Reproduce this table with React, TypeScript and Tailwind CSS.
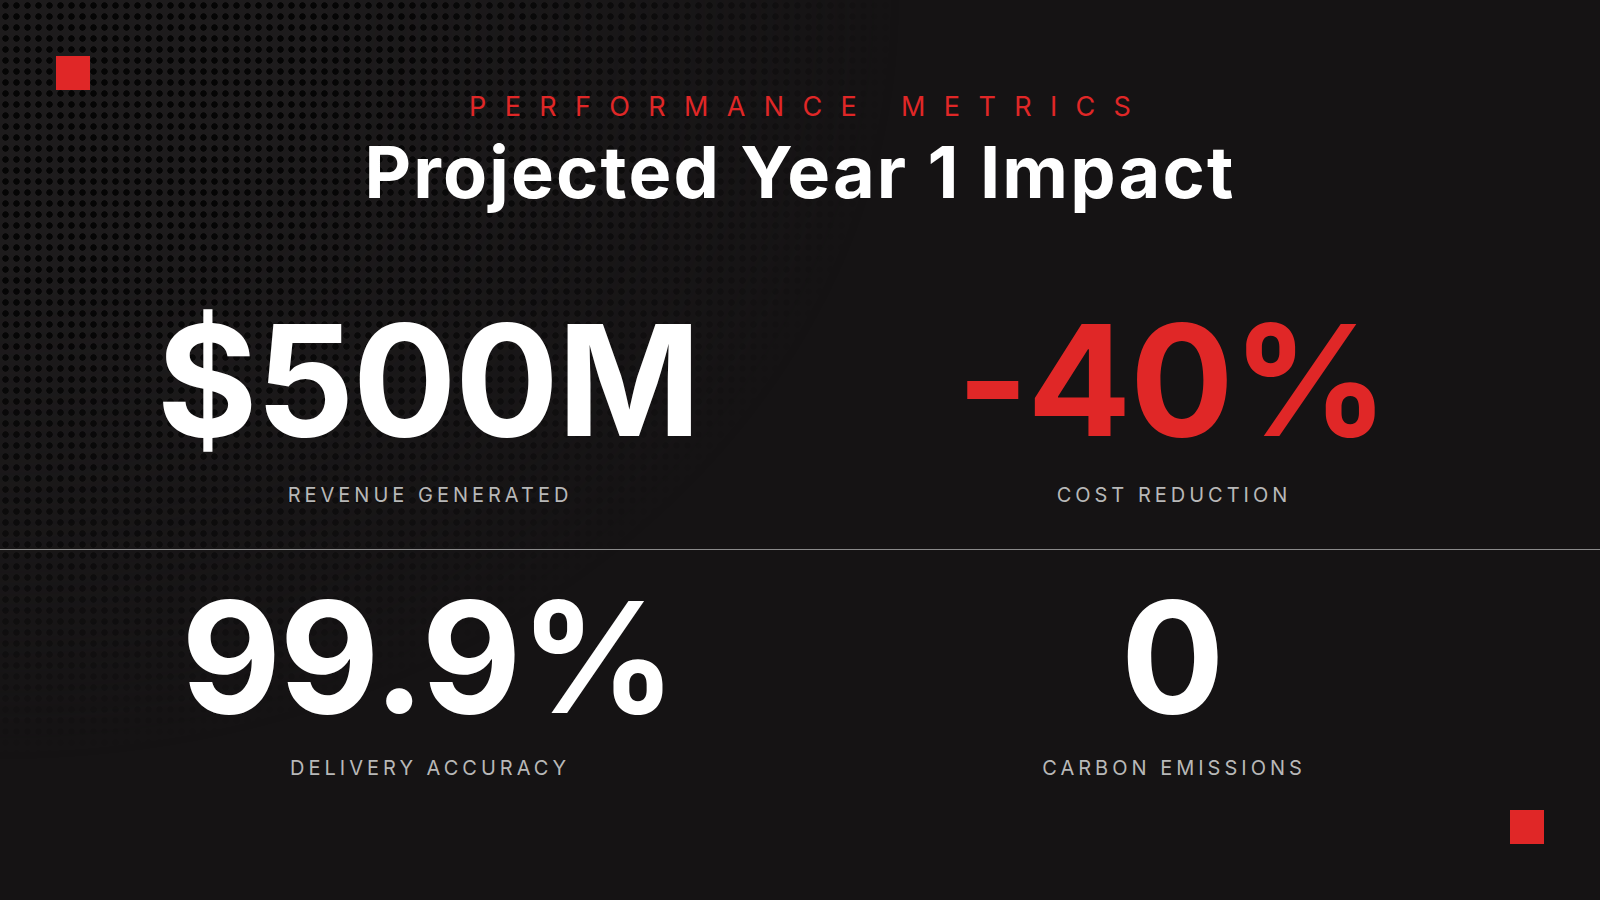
const stats = [
  { value: "$500M", label: "Revenue Generated", accent: false },
  { value: "-40%", label: "Cost Reduction", accent: true },
  { value: "99.9%", label: "Delivery Accuracy", accent: false },
  { value: "0", label: "Carbon Emissions", accent: false },
];

function Stat({
  value,
  label,
  accent,
  tight = false,
}: {
  value: string;
  label: string;
  accent: boolean;
  tight?: boolean;
}) {
  return (
    <div className="flex flex-col items-center">
      <div
        className={`text-[154px] font-bold leading-none tracking-[-0.01em] ${
          accent ? "text-[#e02727]" : "text-white"
        }`}
      >
        {value}
      </div>
      <div
        className={`${
          tight ? "mt-[24px]" : "mt-[28px]"
        } text-[20px] leading-none uppercase tracking-[0.2em] pl-[0.2em] text-[#b8b8b8]`}
      >
        {label}
      </div>
    </div>
  );
}

export default function App() {
  return (
    <div className="relative w-full h-[900px] overflow-hidden bg-[#151314] font-['Inter','Liberation_Sans',sans-serif]">
      {/* halftone dots, fading out from the top-left corner */}
      <div className="pointer-events-none absolute inset-0 bg-[#1d1b1c] bg-[radial-gradient(circle,#050505_2.9px,transparent_3.5px)] [background-size:11px_11px] [mask-image:radial-gradient(ellipse_900px_760px_at_0%_0%,#000_35%,rgba(0,0,0,0.6)_65%,transparent_100%)]" />

      <div className="absolute top-14 left-14 w-[34px] h-[34px] bg-[#e02727]" />
      <div className="absolute bottom-14 right-14 w-[34px] h-[34px] bg-[#e02727]" />

      <div className="relative flex flex-col">
        <header className="flex flex-col items-center pt-[93px]">
          <p className="text-[27px] leading-none uppercase tracking-[0.68em] pl-[0.68em] text-[#e02727]">
            Performance Metrics
          </p>
          <h1 className="mt-[16px] text-[72px] font-bold leading-none tracking-[0.03em] text-white">
            Projected Year 1 Impact
          </h1>
        </header>

        <div className="mt-[95px] grid grid-cols-2 px-14 pb-[44px]">
          <Stat {...stats[0]} />
          <Stat {...stats[1]} />
        </div>
        <div className="h-px bg-[#8a8a8a]" />
        <div className="grid grid-cols-2 px-14 pt-[30px]">
          <Stat {...stats[2]} tight />
          <Stat {...stats[3]} tight />
        </div>
      </div>
    </div>
  );
}
